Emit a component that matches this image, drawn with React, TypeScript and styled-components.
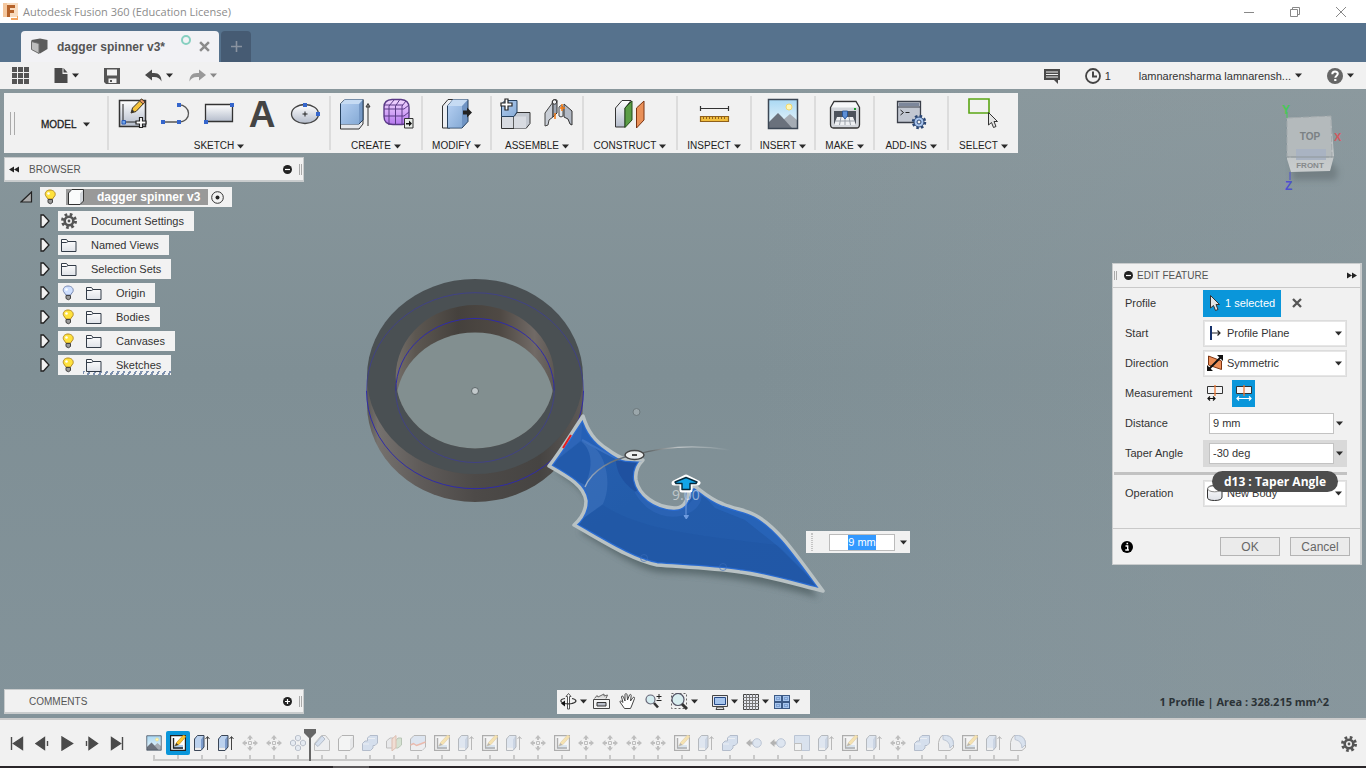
import React from "react";
import styled, { createGlobalStyle, css } from "styled-components";

const GlobalStyle = createGlobalStyle`
  *, *::before, *::after { box-sizing: border-box; }
  html, body, #root { height: 100%; }
  body { margin: 0; overflow: hidden; font: 11px/14px "Liberation Sans", Arial, sans-serif; color: #333; }
  button, input, select { font: inherit; color: inherit; }
  button { border: 0; padding: 0; background: none; cursor: pointer; }
  svg { display: block; flex: none; }
`;

/* ---------- shell ---------- */

const Shell = styled.div`
  display: flex;
  flex-direction: column;
  min-height: 100vh;
  background: #86959a;
`;

const TitleBar = styled.header`
  display: flex;
  align-items: center;
  height: 23px;
  padding: 0 2px;
  background: #fff;
`;

const AppTitle = styled.h1`
  flex: 1;
  margin: 0 0 0 5px;
  font: 11px/16px "Open Sans", "Noto Sans", sans-serif;
  color: #8c8c8c;
`;

const WindowButton = styled.button`
  display: grid;
  place-items: center;
  width: 46px;
  height: 22px;
`;

const TabBar = styled.nav`
  display: flex;
  align-items: flex-end;
  gap: 2px;
  height: 39px;
  padding-left: 21px;
  background: #56728d;
`;

const Tab = styled.div`
  display: flex;
  align-items: center;
  width: 198px;
  height: 31px;
  padding: 0 9px 0 10px;
  border-radius: 4px 4px 0 0;
  background: #f2f2f5;
`;

const TabName = styled.span`
  flex: 1;
  margin-left: 9px;
  padding-top: 1px;
  font-weight: bold;
  font-size: 12px;
  color: #555;
`;

const SyncRing = styled.span`
  align-self: flex-start;
  width: 10px;
  height: 10px;
  margin: 4px 8px 0 0;
  border: 2px solid #86cfc0;
  border-radius: 50%;
`;

const NewTab = styled.button`
  display: grid;
  place-items: center;
  width: 30px;
  height: 31px;
  border-radius: 4px 4px 0 0;
  background: #465b73;
`;

const QuickBar = styled.div`
  display: flex;
  align-items: center;
  height: 27px;
  padding: 0 12px;
  background: #f1f1f1;
`;

const QuickButton = styled.button<{ $after?: number }>`
  display: flex;
  align-items: center;
  gap: 4px;
  margin-right: ${(p) => p.$after ?? 0}px;
`;

const Spacer = styled.span<{ $width?: number }>`
  flex: ${(p) => (p.$width ? `0 0 ${p.$width}px` : "1")};
`;

/* ---------- viewport ---------- */

const Viewport = styled.main`
  position: relative;
  display: flex;
  flex: 1;
  flex-direction: column;
  padding: 4px;
  background: linear-gradient(90deg, #82929800 55%, #8f9ca166), linear-gradient(180deg, #89979c, #7f8f95 45%, #83939a);
`;

const Scene = styled.svg`
  position: absolute;
  inset: 0;
  width: 100%;
  height: 100%;
`;

const CubeSlot = styled.div`
  position: absolute;
  top: 11px;
  right: 19px;
`;

const Ribbon = styled.div`
  position: relative;
  display: flex;
  align-self: flex-start;
  height: 60px;
  background: #f1f1f1;
`;

const Workspace = styled.div`
  display: flex;
  align-items: center;
  width: 103px;
  padding-left: 6px;
`;

const Grip = styled.span<{ $height: number; $width?: number }>`
  width: ${(p) => p.$width ?? 4}px;
  height: ${(p) => p.$height}px;
  border: solid #aaa;
  border-width: 0 1px;
`;

const Caps = styled.button`
  display: flex;
  flex: none;
  align-items: center;
  justify-content: center;
  gap: 3px;
  padding-top: 5px;
  font-size: 10px;
  line-height: 14px;
  color: #222;
`;

const WorkspaceName = styled(Caps)`
  margin-left: 26px;
  gap: 6px;
  padding-top: 3px;
  -webkit-text-stroke: 0.3px;
`;

const Group = styled.section<{ $width: number }>`
  display: flex;
  flex-direction: column;
  width: ${(p) => p.$width}px;
  height: 54px;
  margin-top: 3px;
  border-left: 2px solid #dcdcdc;
`;

const Tools = styled.div`
  display: flex;
  flex: none;
  justify-content: center;
  height: 38px;
`;

const Tool = styled.button`
  display: grid;
  justify-items: center;
  align-items: start;
  width: 43px;
  padding-top: 2px;
`;

const Letter = styled.span`
  font-weight: bold;
  font-size: 37px;
  line-height: 34px;
  color: #444;
`;

const PanelHead = styled.div`
  position: relative;
  display: flex;
  align-items: center;
  width: 300px;
  height: 25px;
  padding: 0 1px 0 4px;
  background: #f1f1f1;
  border: 1px solid #c9cccd;
  border-bottom-width: 2px;
`;

const PanelName = styled.h2<{ $indent: number }>`
  flex: 1;
  margin: 0 0 0 ${(p) => p.$indent}px;
  padding-top: 1px;
  font-weight: normal;
  font-size: 10px;
  line-height: 14px;
  color: #555;
`;

const Middle = styled.div`
  display: flex;
  flex: 1;
  align-items: flex-start;
  justify-content: space-between;
  margin-top: 4px;
`;

const Tree = styled.ul`
  position: relative;
  display: flex;
  flex-direction: column;
  gap: 4px;
  margin: 5px 0 0;
  padding: 0 0 0 36px;
  list-style: none;
`;

const RootRow = styled.li`
  display: flex;
  align-items: center;
  gap: 7px;
  margin-left: -20px;
`;

const Row = styled.li`
  display: flex;
  align-items: center;
  gap: 8px;
`;

const RowBox = styled.div<{ $dashed?: boolean }>`
  display: flex;
  align-items: center;
  height: 20px;
  padding: 0 10px 0 3px;
  background: #f2f2f2;
  ${(p) =>
    p.$dashed &&
    css`
      background: repeating-linear-gradient(120deg, #7d90ad 0 2px, transparent 2px 5px) 25px 16px / 88px 4px no-repeat, #f2f2f2;
    `}
`;

const Bulb = styled.button`
  width: 25px;
`;

const RowIcon = styled.span`
  width: 30px;
`;

const RootName = styled.span`
  display: flex;
  align-items: center;
  gap: 13px;
  height: 16px;
  width: 142px;
  margin-left: -2px;
  padding-left: 2px;
  font-weight: bold;
  font-size: 12px;
  background: #999;
  color: #fff;
`;

const Activate = styled.button`
  margin: 0 -2px 0 3px;
`;

const BottomRow = styled.footer`
  position: relative;
  display: grid;
  grid-template-columns: 1fr auto 1fr;
  align-items: center;
`;

const NavBar = styled.div`
  display: flex;
  align-items: center;
  height: 24px;
  padding: 0 10px 0 3px;
  background: #f1f1f1;
`;

const NavButton = styled.button<{ $after?: number }>`
  display: flex;
  align-items: center;
  gap: 3px;
  margin-right: ${(p) => p.$after ?? 8}px;
`;

const Status = styled.output`
  justify-self: end;
  padding-right: 33px;
  font: bold 11px/16px "Open Sans", "Noto Sans", sans-serif;
  color: #2b3236;
`;

const Dimension = styled.div`
  position: absolute;
  left: 806px;
  top: 442px;
  display: flex;
  align-items: center;
  width: 104px;
  height: 22px;
  padding: 0 3px 0 5px;
  background: #f1f1f1;
`;

const DimensionGrip = styled.span`
  width: 3px;
  height: 18px;
  margin-right: 16px;
  border: dotted #c4c4c4;
  border-width: 0 1px;
`;

const DimensionValue = styled.input`
  width: 66px;
  height: 17px;
  margin-right: 5px;
  padding: 0;
  border: 1px solid #bbb;
  background: linear-gradient(#3399ff, #3399ff) center / 28px 15px no-repeat, #fff;
  color: #fff;
  text-align: center;
`;

/* ---------- edit feature ---------- */

const Dialog = styled.form`
  position: relative;
  width: 250px;
  margin-top: 106px;
  background: #f1f1f1;
  border: 1px solid #c9cccd;
  border-right-width: 2px;
`;

const DialogHead = styled.div`
  display: flex;
  align-items: center;
  height: 24px;
  padding: 0 3px 0 1px;
  border-bottom: 1px solid #c9c9c9;
`;

const Field = styled.div`
  display: flex;
  align-items: center;
  height: 30px;
  padding-left: 12px;
`;

const Label = styled.label`
  width: 78px;
`;

const Choice = styled.span`
  display: flex;
  align-items: center;
  width: 144px;
  height: 27px;
  padding: 0 4px 0 3px;
  border: 1px solid #dcdcdc;
  outline: 1px solid #e6e6e6;
  outline-offset: -2px;
  background: #fff;
`;

const Select = styled.select`
  flex: 1;
  min-width: 0;
  margin-left: 4px;
  padding: 0;
  border: 0;
  appearance: none;
  background: transparent;
`;

const Selected = styled.button`
  display: flex;
  align-items: center;
  gap: 5px;
  width: 78px;
  height: 27px;
  margin-right: 11px;
  padding-left: 7px;
  background: #0a96da;
  color: #fff;
`;

const Measure = styled.button<{ $on?: boolean }>`
  display: grid;
  place-items: center;
  width: 23px;
  height: 27px;
  margin-right: 6px;
  background: ${(p) => (p.$on ? "#0a96da" : "none")};
`;

const Entry = styled.span<{ $active?: boolean }>`
  display: flex;
  align-items: center;
  gap: 2px;
  width: 144px;
  height: 27px;
  padding: 0 4px 0 6px;
  background: ${(p) => (p.$active ? "#d9d9d9" : "none")};
`;

const EntryInput = styled.input`
  flex: 1;
  min-width: 0;
  height: 21px;
  padding: 0 3px;
  border: 1px solid #c3c3c3;
  background: #fff;
`;

const Rule = styled.hr`
  height: 3px;
  margin: 4px 13px 3px 1px;
  border: 0;
  background: #c2c2c2;
`;

const DialogFoot = styled.div`
  display: flex;
  align-items: center;
  gap: 10px;
  height: 36px;
  margin-top: 20px;
  padding: 0 10px 0 8px;
  border-top: 1px solid #c9c9c9;
`;

const DialogButton = styled.button`
  width: 60px;
  height: 19px;
  border: 1px solid #b4b4b4;
  background: #ebebeb;
  font-size: 12px;
  line-height: 16px;
  color: #666;
`;

const Tooltip = styled.div`
  position: absolute;
  top: 207px;
  left: 99px;
  width: 126px;
  height: 21px;
  border-radius: 11px;
  background: #4d4d4d;
  color: #fff;
  font: bold 12px/21px "Open Sans", "Noto Sans", sans-serif;
  text-align: center;
  white-space: nowrap;
`;

/* ---------- timeline ---------- */

const Timeline = styled.footer`
  display: flex;
  align-items: flex-start;
  height: 48px;
  padding-left: 10px;
  border-top: 2px solid #cbcbcb;
  background: #f1f1f1;
`;

const Transport = styled.div`
  display: flex;
  gap: 11px;
  margin: 16px 18px 0 0;
`;

const Steps = styled.ol`
  display: flex;
  margin: 11px 0 0;
  padding: 0;
  list-style: none;
`;

const Step = styled.li<{ $edge?: "first" | "last" }>`
  position: relative;
  display: flex;
  flex-direction: column;
  width: 24px;
  &::before {
    content: "";
    order: 1;
    width: 2px;
    height: 4px;
    margin: 0 auto;
    background: #c9c9c9;
  }
  &::after {
    content: "";
    order: 2;
    height: 2px;
    margin-left: ${(p) => (p.$edge === "first" ? 11 : 0)}px;
    margin-right: ${(p) => (p.$edge === "last" ? 11 : 0)}px;
    background: #c9c9c9;
  }
`;

const StepButton = styled.button<{ $on?: boolean; $dim?: boolean }>`
  display: grid;
  place-items: center;
  width: 24px;
  height: 24px;
  border-radius: 2px;
  background: ${(p) => (p.$on ? "#0a96da" : "none")};
  svg { opacity: ${(p) => (p.$dim ? 0.32 : 1)}; }
`;

const Marker = styled.svg`
  position: absolute;
  top: -2px;
  left: -6px;
`;

const TimelineSettings = styled.button`
  margin: 16px 9px 0 0;
`;

const Taskbar = styled.div`
  height: 2px;
  padding-left: 333px;
  background: #2a2629;
  &::before {
    content: "";
    display: block;
    width: 36px;
    height: 2px;
    background: #5b585a;
  }
`;

/* ---------- drawings ---------- */

type Draw = { children: React.ReactNode; w?: number; h?: number; box?: string };
const Svg = ({ children, w = 16, h = w, box }: Draw) => (
  <svg width={w} height={h} viewBox={box ?? `0 0 ${w} ${h}`} fill="none" aria-hidden="true">
    {children}
  </svg>
);

const Caret = ({ color = "#2b2b2b" }: { color?: string }) => (
  <Svg w={7} h={5}>
    <path d="M0 0.500h7L3.500 4.500z" fill={color} />
  </Svg>
);

const Cross = ({ color = "#888", w = 10 }: { color?: string; w?: number }) => (
  <Svg w={w} box="0 0 10 10">
    <path d="M1 1l8 8M9 1l-8 8" stroke={color} strokeWidth="2.300" />
  </Svg>
);

const Definitions = styled.svg`
  position: absolute;
`;

const Gradients = () => (
  <Definitions width="0" height="0" aria-hidden="true">
    <defs>
      <linearGradient id="steel" x1="0" y1="0" x2="0" y2="1">
        <stop offset="0" stopColor="#fff" />
        <stop offset="1" stopColor="#b4bccb" />
      </linearGradient>
      <linearGradient id="pale" x1="0" y1="0" x2="0" y2="1">
        <stop offset="0" stopColor="#fff" />
        <stop offset="1" stopColor="#dfe2e8" />
      </linearGradient>
      <linearGradient id="blue" x1="0" y1="0" x2="1" y2="1">
        <stop offset="0" stopColor="#b2cdf0" />
        <stop offset="1" stopColor="#86abd6" />
      </linearGradient>
      <linearGradient id="violet" x1="0" y1="0" x2="0" y2="1">
        <stop offset="0" stopColor="#f3d8ff" />
        <stop offset="1" stopColor="#b678ef" />
      </linearGradient>
      <linearGradient id="sky" x1="0" y1="0" x2="0" y2="1">
        <stop offset="0" stopColor="#aad8f3" />
        <stop offset="1" stopColor="#eef8fc" />
      </linearGradient>
      <linearGradient id="wallIn" x1="0" y1="0" x2="1" y2="0">
        <stop offset="0" stopColor="#7b7570" />
        <stop offset="0.15" stopColor="#5c5751" />
        <stop offset="0.4" stopColor="#45413d" />
        <stop offset="0.65" stopColor="#4f4944" />
        <stop offset="0.85" stopColor="#716a66" />
        <stop offset="1" stopColor="#57524e" />
      </linearGradient>
      <linearGradient id="wallOut" x1="0" y1="0" x2="1" y2="0">
        <stop offset="0" stopColor="#5a5855" />
        <stop offset="0.05" stopColor="#75716e" />
        <stop offset="0.25" stopColor="#5f5b59" />
        <stop offset="0.5" stopColor="#4d4a48" />
        <stop offset="0.8" stopColor="#464442" />
        <stop offset="1" stopColor="#5d5957" />
      </linearGradient>
      <linearGradient id="blade" x1="0" y1="0" x2="1" y2="1">
        <stop offset="0" stopColor="#2860b2" />
        <stop offset="0.4" stopColor="#235caa" />
        <stop offset="1" stopColor="#235aab" />
      </linearGradient>
      <linearGradient id="arcFade" gradientUnits="userSpaceOnUse" x1="585" y1="0" x2="730" y2="0">
        <stop offset="0" stopColor="#9fb2cc" />
        <stop offset="0.2" stopColor="#66707a" />
        <stop offset="0.45" stopColor="#63696b" />
        <stop offset="0.65" stopColor="#c0c6c8" />
        <stop offset="1" stopColor="#c0c6c8" stopOpacity="0" />
      </linearGradient>
      <linearGradient id="cube" x1="0" y1="0" x2="0" y2="1">
        <stop offset="0" stopColor="#b3b9bb" />
        <stop offset="1" stopColor="#c9cdce" />
      </linearGradient>
      <filter id="soft" x="-20%" y="-20%" width="140%" height="140%">
        <feGaussianBlur stdDeviation="3" />
      </filter>
    </defs>
  </Definitions>
);

const Grid9 = () => (
  <Svg w={18}>
    {[0, 6, 12].map((y) => [0, 6, 12].map((x) => <rect key={`${x}-${y}`} x={x} y={y} width="5" height="5" fill="#555" />))}
  </Svg>
);
const FileIcon = () => (
  <Svg w={14} h={17}>
    <path d="M0.500 1h8v6h5v9h-13z" fill="#4a4a4a" />
    <path d="M9.500 1l4 4.500h-4z" fill="#4a4a4a" />
  </Svg>
);
const SaveIcon = () => (
  <Svg w={16}>
    <path d="M0 0h16v16H2L0 14z" fill="#555" />
    <path d="M3 1.500h10v6H3zM4.500 10.500h8V15h-8z" fill="#f1f1f1" />
    <path d="M6 12h2v2H6z" fill="#555" />
  </Svg>
);
const Undo = ({ redo }: { redo?: boolean }) => (
  <Svg w={17} h={14}>
    <g transform={redo ? "translate(17 0) scale(-1 1)" : undefined}>
      <path d="M0 6L7 0.500V4h2c5 0 7.500 3 7.500 8.500C15 9.500 13 8 9 8H7v3.500z" fill={redo ? "#999" : "#4a4a4a"} />
    </g>
  </Svg>
);
const Speech = () => (
  <Svg w={16}>
    <path d="M0 1h16v11h-2v4l-4-4H0z" fill="#4a4a4a" />
    <path d="M2 4h12M2 6.500h12M2 9h12" stroke="#f1f1f1" />
  </Svg>
);
const Clock = () => (
  <Svg w={16}>
    <circle cx="8" cy="8" r="7" stroke="#444" strokeWidth="1.800" />
    <path d="M8 3.500V8.500h4" stroke="#444" strokeWidth="2" />
  </Svg>
);
const Help = () => (
  <Svg w={16}>
    <circle cx="8" cy="8" r="8" fill="#666" />
    <path d="M5.300 6.200c0-3.600 5.500-3.400 5.500-.4 0 1.900-2.500 1.900-2.500 4" stroke="#fff" strokeWidth="2" />
    <path d="M7.200 11h2.200v2H7.200z" fill="#fff" />
  </Svg>
);
const FusionLogo = () => (
  <Svg w={16} h={17}>
    <path d="M1 0h15v14H1z" fill="#f8dcc0" />
    <path d="M1 0h4v14H1z" fill="#f4c79e" />
    <path d="M5 2h8v3H8v2h4v3H8v4H5z" fill="#b5622a" />
    <path d="M9 15h6v-2h1v4H9z" fill="#f3a55f" />
  </Svg>
);
const TabCube = () => (
  <Svg w={17} h={17}>
    <path d="M0.500 2L9 0.500l7.500 1.500v9L9 15.500l-8.500-4.500z" fill="#5c5c5c" />
    <path d="M0.500 3.500L8 5.500v10l-7.500-4z" fill="#bdbdbd" stroke="#6c6c6c" />
  </Svg>
);

const Pencil = () => (
  <g>
    <path d="M14 15l1.500-5L24.500 1l3.500 3-9 9.500z" fill="#f5c33b" stroke="#3a3020" />
    <path d="M24.500 1l3.500 3-1.800 2-3.600-3z" fill="#e79a6b" stroke="#3a3020" strokeWidth="0.800" />
    <path d="M14 15l1.200-3.500 2.300 2z" fill="#333" />
  </g>
);
const SketchBig = () => (
  <Svg w={32}>
    <path d="M2.500 2.500h26v26h-26z" fill="url(#steel)" stroke="#333" strokeWidth="1.500" />
    <path d="M6 6v18h14" stroke="#222" />
    <path d="M5 22.500h3.500V26H5z" fill="#6ea3ea" stroke="#2a5bb5" />
    <Pencil />
    <path d="M22.500 19.500h3v3.500h3.500v3h-3.500v3.500h-3V26H19v-3h3.500z" fill="#fff" stroke="#222" strokeWidth="1.200" />
  </Svg>
);
const LineTool = () => (
  <Svg w={32}>
    <path d="M3 24h15c15 0 13-18 0-17" stroke="#555" strokeWidth="1.300" />
    <path d="M1 22h4v4H1zM17 22h4v4h-4zM17 5h4v4h-4z" fill="#3566cc" />
  </Svg>
);
const RectTool = () => (
  <Svg w={32}>
    <path d="M2.500 6.500h27v17h-27z" fill="url(#steel)" stroke="#333" strokeWidth="1.300" />
    <path d="M1 22h4v4H1zM27 5h4v4h-4z" fill="#3566cc" />
  </Svg>
);
const TextTool = () => <Letter>A</Letter>;
const EllipseTool = () => (
  <Svg w={32}>
    <ellipse cx="16" cy="16" rx="13.500" ry="9.500" fill="url(#steel)" stroke="#444" strokeWidth="1.300" />
    <path d="M14 5h4v4h-4zM27 14h4v4h-4z" fill="#3566cc" />
    <path d="M13.500 16h5M16 13.500v5" stroke="#222" />
  </Svg>
);
const ExtrudeBig = () => (
  <Svg w={32}>
    <path d="M1.500 6L6 1.500h18V26l-4 5H1.500z" fill="#e6e8ec" stroke="#333" />
    <path d="M1.500 6L6 1.500h18V22l-4 4H1.500z" fill="#7699c6" stroke="#26415f" />
    <path d="M1.500 6L6 1.500h18L20 6z" fill="#c6dbf3" />
    <path d="M2 6h18v20H2z" fill="url(#blue)" />
    <path d="M29 28V7M27 9l2-3.500L31 9z" stroke="#333" />
  </Svg>
);
const FormBig = () => (
  <Svg w={32}>
    <path d="M2 9q0-7 8-7.500h9q8 .5 8 8v9q0 8-7 8h-9q-9 0-9-8z" fill="url(#violet)" stroke="#5a3a86" strokeWidth="1.400" />
    <path d="M2 11h20l5-4M2 18h20l5-4M7 27V8l5-6M13.500 27V8l4-6M20 27V8l4-5M3 7h18" stroke="#5a3a86" />
    <path d="M22.500 20.500h8.500v9.500h-8.500z" fill="#e8ece8" stroke="#333" />
    <path d="M24 25h3v-2.500l3 3-3 3V26.500h-3z" fill="#111" />
  </Svg>
);
const ModifyBig = () => (
  <Svg w={32}>
    <path d="M1.500 8L7 1.500h8L9 8v22H1.500z" fill="#eceef2" stroke="#333" />
    <path d="M6.500 8L12 1.500h15v22l-6 6.500H6.500z" fill="#6f94c4" stroke="#26415f" />
    <path d="M6.500 8L12 1.500h15L21 8z" fill="#c6dbf3" />
    <path d="M7 8h14v21.500H7z" fill="url(#blue)" />
    <path d="M22 12.500h4V9.500l5 5-5 5v-3h-4z" fill="#222" />
  </Svg>
);
const AssembleBig = () => (
  <Svg w={32}>
    <path d="M1.500 18.500h12.500v12H1.500z" fill="#d8dbe1" stroke="#333" />
    <path d="M14 18.500l3-4h13v11l-4 5H14z" fill="#c3c8d0" stroke="#333" />
    <path d="M1.500 6L5 2.500h12V14l-3 4.500H1.500z" fill="url(#blue)" stroke="#26415f" />
    <path d="M14 18.500h12v12H14z" fill="#d8dbe1" />
    <path d="M5 1h3v4h4v3H8v4H5V8H1V5h4z" fill="#fff" stroke="#222" strokeWidth="1.200" />
  </Svg>
);
const JointBig = () => (
  <Svg w={32}>
    <path d="M2 28V15l8-11v15l-4 3-1 5z" fill="#c9ced6" stroke="#444" />
    <path d="M9 4q1-3 3.500-2.500T14 4v11l-4 4V6z" fill="#9fa7b3" stroke="#333" />
    <circle cx="11.500" cy="4" r="2.200" fill="#f0f1f3" stroke="#333" />
    <path d="M29 27V13l-8-7v13l4 2 2 5z" fill="#b3bac5" stroke="#333" />
    <path d="M16 9q2-3 4 0v9q-2 2-4 0z" fill="#e4e7eb" stroke="#444" />
    <path d="M12 15v6M19 6v7M17 10h5" stroke="#f47a12" strokeWidth="1.500" />
  </Svg>
);
const ConstructBig = () => (
  <Svg w={32}>
    <path d="M1.500 10L8 2.500h9L11 10v19H1.500z" fill="url(#steel)" stroke="#333" />
    <path d="M11 10l7-7v19l-7 7.500z" fill="#5b9d46" stroke="#254c1b" />
    <path d="M22.500 10L30 3v19l-7.500 8z" fill="#e99058" stroke="#7b3412" />
  </Svg>
);
const InspectBig = () => (
  <Svg w={32}>
    <path d="M2.500 10.500h28M2.500 8v5M30.500 8v5" stroke="#333" strokeWidth="1.200" />
    <path d="M2.500 18.500h28v5h-28z" fill="#f0bd3d" stroke="#90601a" strokeWidth="1.200" />
    <path d="M5.500 19v2M8.500 19v2M11.500 19v2M14.500 19v2M17.500 19v2M20.500 19v2M23.500 19v2M26.500 19v2" stroke="#90601a" />
  </Svg>
);
const Picture = ({ w = 32 }: { w?: number }) => (
  <Svg w={w} box="0 0 32 32">
    <path d="M1.500 1.500h29v29h-29z" fill="url(#sky)" />
    <circle cx="22" cy="9" r="3" fill="#fff7b8" stroke="#f1d76c" />
    <path d="M16 22l7-6 7 6v8H16z" fill="#a5acb4" />
    <path d="M2 24l9-9 4 4 10 11H2z" fill="#6a717c" />
    <path d="M1.500 1.500h29v29h-29z" stroke="#3c4755" strokeWidth="1.500" />
  </Svg>
);
const MakeBig = () => (
  <Svg w={32}>
    <path d="M1.500 9.500L5 3.500h22l3.500 6v17q0 3.500-3 3.500h-23q-3 0-3-3.500z" fill="#d3d6db" stroke="#333" strokeWidth="1.300" />
    <path d="M5.500 4.500h21l3 5h-27z" fill="#f6f7f8" />
    <path d="M5 13h22v14H5z" fill="#4d535c" />
    <path d="M8 19h16l3 8H5z" fill="#eef0f2" />
    <path d="M6.500 23h19M12 19l-1.500 8M16 19v8M20 19l1.500 8" stroke="#9aa0a8" />
    <path d="M13.500 13h5v5l-2.500 3-2.500-3z" fill="#5c8fd6" stroke="#1d4c93" strokeWidth="0.800" />
    <path d="M25 10h2v2h-2z" fill="#1a9c2a" />
  </Svg>
);
const AddinsBig = () => (
  <Svg w={32}>
    <path d="M2.500 3.500h23v21h-23z" fill="#c2c7d1" stroke="#3a3f49" strokeWidth="1.300" />
    <path d="M4 5h20v3H4z" fill="#7d879b" />
    <path d="M2.500 9h23" stroke="#3a3f49" />
    <path d="M5.500 12l3 2.500-3 2.500M10.500 14.500h4" stroke="#222" />
    <circle cx="24" cy="24" r="5.500" stroke="#2b4774" strokeWidth="3.500" strokeDasharray="2.300 2" />
    <circle cx="24" cy="24" r="5" fill="#a9c5ee" stroke="#2b4774" />
    <circle cx="24" cy="24" r="2" fill="#f1f1f1" stroke="#2b4774" />
  </Svg>
);
const Arrowhead = ({ x = 0, y = 0 }: { x?: number; y?: number }) => (
  <path transform={`translate(${x} ${y})`} d="M0 0v12.500l3-2.500 2 5 2.500-1L5.500 9H9z" fill="#e4e4e4" stroke="#333" />
);
const SelectBig = () => (
  <Svg w={32}>
    <path d="M1 1h20v14H1z" stroke="#5ba614" strokeWidth="1.600" />
    <Arrowhead x={20.5} y={14.5} />
  </Svg>
);

const BulbIcon = ({ off }: { off?: boolean }) => (
  <Svg w={15} h={16}>
    <path d="M7 1C3.500 1 1.500 3.500 2.500 6.500L5 10h4.500l2.500-3.500C13 3.500 10.500 1 7 1z" fill={off ? "#cfe0ff" : "#ffe23d"} stroke={off ? "#7788b0" : "#b38a24"} />
    <path d="M5 10.500h4.500v3q-2 2.500-4.500 0z" fill="#999" stroke="#444" />
    <circle cx="5.500" cy="4.500" r="1.300" fill="#fff" />
  </Svg>
);
const Folder = () => (
  <Svg w={16}>
    <path d="M0.500 14.500v-12h5l1.500 2h8v10z" fill="url(#pale)" stroke="#333c48" />
    <path d="M0.500 5.500h5l1.500-1" stroke="#333c48" />
  </Svg>
);
const GearIcon = () => (
  <Svg w={16}>
    <circle cx="8" cy="8" r="6.500" stroke="#555" strokeWidth="3" strokeDasharray="2.600 2.500" />
    <circle cx="8" cy="8" r="4.300" stroke="#555" strokeWidth="2.600" />
    <circle cx="8" cy="8" r="1.400" fill="#555" />
  </Svg>
);
const BoxIcon = () => (
  <Svg w={16}>
    <path d="M0.500 4l3.500-3.500h11.500V12l-3.500 3.500H0.500z" fill="#d3d7dc" stroke="#333" />
    <path d="M1 4.500L4 1h11l-3 3.500V15H1z" fill="#fafbfb" />
  </Svg>
);
const Closed = () => (
  <Svg w={10} h={14}>
    <path d="M1 1h2.500L9 7l-5.500 6H1z" fill="#f2f2f2" stroke="#222" strokeWidth="1.300" />
  </Svg>
);
const Open = () => (
  <Svg w={13} h={12}>
    <path d="M1 11h10.500V1z" fill="#aaa" stroke="#222" strokeWidth="1.200" />
  </Svg>
);
const RadioIcon = () => (
  <Svg w={13}>
    <circle cx="6.500" cy="6.500" r="5.800" stroke="#333" />
    <circle cx="6.500" cy="6.500" r="2" fill="#222" />
  </Svg>
);
const Disc = ({ plus }: { plus?: boolean }) => (
  <Svg w={9}>
    <circle cx="4.500" cy="4.500" r="4.500" fill="#222" />
    <path d={plus ? "M2 4.500h5M4.500 2v5" : "M2 4.500h5"} stroke="#fff" strokeWidth="1.200" />
  </Svg>
);
const Rewind = ({ flip }: { flip?: boolean }) => (
  <Svg w={10} h={7}>
    <path d={flip ? "M0 0.500l5 3-5 3zM5 0.500l5 3-5 3z" : "M5 0.500l-5 3 5 3zM10 0.500l-5 3 5 3z"} fill="#222" />
  </Svg>
);

/* navigation bar icons */
const OrbitIcon = () => (
  <Svg w={17}>
    <path d="M5 5.500C-1 6.500 0 9.500 5 10.500M12 10.500c5-1 5.500-4 0-5" stroke="#333" strokeWidth="1.200" />
    <path d="M7.500 16V3.500H6L8.500 0.500l2.500 3H9.500V16z" fill="#fff" stroke="#555" />
    <path d="M4 10.500c4 .7 7 .4 9-.2" stroke="#333" strokeWidth="1.200" />
    <path d="M5 7.500v6L1 10.500z" fill="#111" />
  </Svg>
);
const LookIcon = () => (
  <Svg w={17}>
    <path d="M1.500 5.500l2.500-3 1 1.500L11 1v2l3.500-1-1.500 3.500" fill="#ddd" stroke="#666" />
    <path d="M0.500 6.500h16v9h-16z" fill="#f4f4f4" stroke="#444" />
    <path d="M4 9.500h9v3.500H4z" fill="#b9bec9" stroke="#333" />
  </Svg>
);
const HandIcon = () => (
  <Svg w={17}>
    <path d="M5.500 15.500L1 9c0-1.500 1-1.500 3 .5L2.500 4c0-1.300 1.500-1.300 2 0l1.500 4L6 1.500c.3-1.300 1.800-1 2 0L8.500 7 10.500 2c.5-1 2-.5 1.700.5L11.500 8l2.500-3.500c1-.7 2 0 1.500 1L13 12l-1.500 3.500z" fill="#fff" stroke="#444" />
  </Svg>
);
const ZoomIcon = () => (
  <Svg w={17}>
    <circle cx="5.500" cy="6.500" r="4.500" fill="#d5ecf0" stroke="#667" strokeWidth="1.200" />
    <path d="M9 10l4 4.500" stroke="#333" strokeWidth="2.600" />
    <path d="M11.500 3.500h5M14 1v5M11.500 7.500h5" stroke="#222" />
  </Svg>
);
const FitIcon = () => (
  <Svg w={17}>
    <path d="M0.500 0.500h15v15h-15z" stroke="#666" strokeDasharray="2 2" />
    <circle cx="7" cy="6.500" r="6" fill="#d9eef0" stroke="#556" strokeWidth="1.200" />
    <path d="M11 11l5 5" stroke="#333" strokeWidth="3" />
  </Svg>
);
const MonitorIcon = () => (
  <Svg w={16}>
    <path d="M0.500 1.500h15v11h-15z" fill="#e6e8ee" stroke="#444" />
    <path d="M2.500 3.500h11v7h-11z" fill="#a7c6ee" stroke="#274b88" />
    <path d="M5 13l-1 2.500h8L11 13z" fill="#ddd" stroke="#444" />
  </Svg>
);
const MeshIcon = () => (
  <Svg w={16}>
    <path d="M0.500 0.500h15v15h-15z" fill="#e7e9ef" stroke="#444" />
    <path d="M3.500 0v16M6.500 0v16M9.500 0v16M12.500 0v16M0 3.500h16M0 6.500h16M0 9.500h16M0 12.500h16" stroke="#777" />
  </Svg>
);
const PanesIcon = () => (
  <Svg w={16} h={14}>
    {[[0.5, 0.5], [8.5, 0.5], [0.5, 7.5], [8.5, 7.5]].map(([x, y]) => (
      <g key={`${x}-${y}`}>
        <rect x={x} y={y} width="7" height="6" fill="#a7c6ee" stroke="#3c5a86" />
        <rect x={x + 2} y={y + 2} width="3" height="2" stroke="#7fa2d4" />
      </g>
    ))}
  </Svg>
);

/* timeline icons */
const StepSketch = () => (
  <Svg w={16}>
    <path d="M0.500 0.500h15v15h-15z" fill="#fff" stroke="#222" strokeWidth="1.400" />
    <path d="M3 10h10v4H3z" fill="#a9c9ec" />
    <path d="M3.500 3v10H13" stroke="#222" strokeWidth="1.400" />
    <path d="M5 11l1.500-3.500L13.500 0 16 1.500 9 9.500z" fill="#ffc52e" stroke="#b88410" strokeWidth="0.600" />
    <path d="M5 11l1.300-3 2 1.800z" fill="#333" />
  </Svg>
);
const StepExtrude = () => (
  <Svg w={16}>
    <path d="M0.500 4L3.500 0.500h6.500V12L7 15.500H0.500z" fill="#7d9ccb" stroke="#3b4656" />
    <path d="M1 4.500L3.500 1h6L7 4.500V12.500H1z" fill="#bcd2ee" />
    <path d="M1 12.500h6V15H1z" fill="#eee" />
    <path d="M13.500 15V2M11.500 4l2-2.500 2 2.500" stroke="#444" />
  </Svg>
);
const StepMove = () => (
  <Svg w={16}>
    <path d="M8 0l3 3.500H9V5H7V3.500H5zM8 16l3-3.500H9V11H7v1.500H5zM0 8l3.500-3v2H5v2H3.500v2zM16 8l-3.500-3v2H11v2h1.500v2z" fill="#555" />
    <path d="M6.500 6.500h3v3h-3z" stroke="#555" />
  </Svg>
);
const StepPattern = () => (
  <Svg w={16}>
    {[[8, 3], [3, 8], [13, 8], [8, 13]].map(([x, y]) => (
      <path key={`${x}-${y}`} d={`M${x - 2.5} ${y - 1.5}l2.500-1.500 2.500 1.500v3l-2.500 1.500-2.500-1.500z`} fill="#cfdcf2" stroke="#3d5070" />
    ))}
  </Svg>
);
const StepChamfer = () => (
  <Svg w={16}>
    <path d="M0.500 8.500l7-8h4l4 5v10H0.500z" fill="#e6e9ee" stroke="#555" />
    <path d="M1 9l7-8 3 3-7 7.500z" fill="#9dbbe6" stroke="#34507c" />
  </Svg>
);
const StepCombine = () => (
  <Svg w={16}>
    <path d="M0.500 8.500L3 6h2.500V3L8 0.500h7.500V8L13 10.500h-2V13l-2.500 2.500h-8z" fill="#9dbbe6" stroke="#34507c" />
    <path d="M6 3.500h7M1 9h6" stroke="#dfeafa" />
  </Svg>
);
const StepSplit = () => (
  <Svg w={16}>
    <path d="M0.500 6L4 3h3v10H0.500z" fill="#d6dae0" stroke="#555" />
    <path d="M9.500 6L12 3h3.500v7L12 13H9.500z" fill="#9cc593" stroke="#456b3c" />
    <path d="M6 4l4-3.500v12L6 16z" fill="#f0b79a" stroke="#b3552a" />
  </Svg>
);
const StepSplitBody = () => (
  <Svg w={16}>
    <path d="M0.500 4L4 0.500h11.500V12L12 15.500H0.500z" fill="#b5cdf0" stroke="#444" />
    <path d="M1 10h11l3-4v6L12 15H1z" fill="#e8eaee" />
    <path d="M0.500 10l3-1.500 3 2 4-1.500 5-2" stroke="#e04a22" strokeWidth="1.400" />
  </Svg>
);
const StepJoint = () => (
  <Svg w={16}>
    <path d="M0 8l4.500-4v2.500H8v3H4.500V12z" fill="#333" />
    <circle cx="11" cy="8" r="4.300" fill="#b5cdf0" stroke="#4c6a98" />
  </Svg>
);
const StepScale = () => (
  <Svg w={16}>
    <path d="M0.500 0.500h15v15h-15z" fill="#a9c4ea" stroke="#4c6a98" />
    <path d="M0.500 8.500h7v7h-7z" fill="#f4f5f7" stroke="#555" />
  </Svg>
);
const StepFillet = () => (
  <Svg w={16}>
    <path d="M0.500 7.500Q1 3.500 4 0.500h4.500q7 1 7 9v3L12 15.500H0.500z" fill="#e6e9ee" stroke="#444" />
    <path d="M5 0.500h3.500q7 1 7 9L12 13Q12 6 5 4.500z" fill="#a9c4ea" stroke="#4c6a98" />
  </Svg>
);

/* dialog icons */
const PlaneIcon = () => (
  <Svg w={16}>
    <path d="M4 1v14" stroke="#15306a" strokeWidth="2" />
    <path d="M5 8h8M10.500 5.500L13 8l-2.500 2.500" stroke="#222" strokeWidth="1.200" />
  </Svg>
);
const SymmetricIcon = () => (
  <Svg w={16}>
    <path d="M1.500 1l13 5v8.500l-13-4.500z" fill="#ec8f58" stroke="#7b3412" />
    <path d="M1.500 14.500l13-13" stroke="#111" strokeWidth="2" />
    <path d="M16 0v6l-6-6zM0 16v-6l6 6z" fill="#111" />
  </Svg>
);
const MeasureIcon = ({ on }: { on?: boolean }) => (
  <Svg w={16}>
    <path d="M0.500 1.500h15v7h-15z" fill="#f3f4f6" stroke="#333" />
    <path d="M8 0v11" stroke="#f07830" strokeWidth="1.300" />
    {on ? (
      <path d="M1 13.500h14M3 11.500l-2 2 2 2M13 11.500l2 2-2 2" stroke="#fff" strokeWidth="1.200" />
    ) : (
      <path d="M1 13.500h7M3 11.500l-2 2 2 2M6 11.500l2 2-2 2" stroke="#111" strokeWidth="1.200" />
    )}
  </Svg>
);
const Cylinder = () => (
  <Svg w={16}>
    <path d="M0.500 4Q1 0.500 7.500 0.500T15 4v8q0 3.500-7.500 3.500T0.500 12z" fill="url(#pale)" stroke="#333" />
    <ellipse cx="7.700" cy="3.800" rx="7" ry="3" fill="#fff" stroke="#888" />
  </Svg>
);
const InfoIcon = () => (
  <Svg w={12}>
    <circle cx="6" cy="6" r="6" fill="#000" />
    <path d="M4.500 5h2.200v4M4.300 9h3.600M5.500 2.500h1.600" stroke="#fff" strokeWidth="1.400" />
  </Svg>
);

const bladePath =
  "M583 416C588 432 595 441 607 449C615 455 620 458 626 459L643 460C637 466 635 473 636 480C639 495 655 507 674 508C683 508 686 503 688 496C689 490 691 485 696 487C705 494 712 500 723 504C735 509 746 510 755 515C778 527 797 556 823 591C795 584 765 575 740 572C712 568 683 567 657 565C632 560 606 543 574 525C582 518 586 510 586 501C584 486 570 478 549 466C560 452 571 434 583 416Z";

const Model = () => (
  <Scene aria-label="Ring with dagger blade" role="img">
    <defs>
      <clipPath id="bore"><ellipse cx="475" cy="376.700" rx="79.300" ry="71.700" /></clipPath>
      <clipPath id="shape"><path d={bladePath} /></clipPath>
    </defs>
    <g transform="translate(0 -89)">
      <path d="M367 376.500V404A108 98 0 0 0 583 404V376.500z" fill="url(#wallOut)" />
      <ellipse cx="475" cy="376.500" rx="108" ry="97.500" fill="#4a5053" />
      <g clipPath="url(#bore)">
        <rect x="390" y="300" width="170" height="155" fill="url(#wallIn)" />
        <ellipse cx="475" cy="404" rx="79" ry="71.500" fill="#828f90" />
      </g>
      <g fill="none" stroke="#3b39a6">
        <path d="M366.500 390.700A108.500 98 0 0 1 583.500 390.700" strokeOpacity="0.600" />
        <path d="M366.500 390.700A108.500 98 0 0 0 583.500 390.700" stroke="#2f2ba8" />
        <path d="M395.800 390.500A79.200 72 0 0 0 554.200 390.500" strokeOpacity="0.600" />
        <path d="M395.800 390.500A79.200 72 0 0 1 554.200 390.500" stroke="#2f2ba8" />
      </g>
      <circle cx="475" cy="391" r="3.500" fill="#c3cacc" stroke="#5d6769" />
      <circle cx="636.500" cy="412" r="3.500" fill="#9ba7ab" stroke="#6c787c" />

      <path d="M580 532C610 550 640 572 665 573C720 574 780 586 818 598L800 570 600 520zM553 470C572 482 586 492 588 502L600 480z" fill="#4c5b5e" opacity="0.700" filter="url(#soft)" />
      <path d={bladePath} fill="url(#blade)" />
      <g clipPath="url(#shape)">
        <path d="M583 416L582 440 549 466z" fill="#2d65b8" />
        <path d="M583 416L581 441 604 451 634 461z" fill="#2560b6" />
        <path d="M582 440C590 444 597 449 620 460" stroke="#3a71c2" strokeWidth="2" fill="none" />
        <path d="M549 466L581 441C595 444 603 455 606 470C609 484 607 495 603 504L574 525 588 505z" fill="#467ac4" opacity="0.450" />
        <path d="M549 466L581 441C594 452 592 470 585 485z" fill="#225aab" />
        <path d="M616 461L645 460 634 482 645 498C628 488 617 477 616 461z" fill="#1f51a0" />
        <path d="M638 490C650 512 672 518 690 508C697 503 700 497 696 484" stroke="#2f68bb" strokeWidth="8" fill="none" opacity="0.600" />
        <path d="M603 505C640 530 700 536 778 545L823 591H740L650 568 574 525z" fill="#1f54a2" opacity="0.450" />
        <path d="M696 487L724 504 755 515 778 532 823 591 780 548 745 520 715 508z" fill="#2a66bc" opacity="0.700" />
        <path d={bladePath} fill="none" stroke="#2a6bd0" strokeWidth="6" />
      </g>
      <path d={bladePath} fill="none" stroke="#b9c2c4" strokeWidth="3.500" strokeLinejoin="round" />
      <path d="M563 448l8-13" stroke="#e81c1c" strokeWidth="2" />
      <path d="M585 487C592 470 612 459 634 455C665 446 700 445 730 450" fill="none" stroke="url(#arcFade)" strokeWidth="1.300" />
      <ellipse cx="634.500" cy="455" rx="9.500" ry="4.500" fill="#eceeee" stroke="#444" strokeWidth="1.400" />
      <path d="M632 455h5" stroke="#444" strokeWidth="2" />
      <circle cx="644" cy="558" r="3.500" fill="none" stroke="#3a6dbb" opacity="0.600" />
      <circle cx="723" cy="567" r="3.500" fill="none" stroke="#3a6dbb" opacity="0.600" />
      <text x="672" y="500" fontFamily="Open Sans, sans-serif" fontSize="14" fill="#fff" fillOpacity="0.500">9.00</text>
      <path d="M686 492v24M684 515.500h4.500L686.300 519z" stroke="#6f9ce0" fill="#6f9ce0" />
      <path d="M686 477l12 6h-8V490h-8v-7h-8z" fill="#fff" stroke="#fff" strokeWidth="5" strokeLinejoin="round" />
      <path d="M686 477.500l11 4.500-1 1.500h-6V489.500h-8v-6h-6l-1-1.500z" fill="#12a5e8" stroke="#062a3c" strokeWidth="1.400" strokeLinejoin="round" />
    </g>
  </Scene>
);

const ViewCube = () => (
  <Svg w={70} h={94}>
    <path d="M15 20v60h44l2-10z" fill="#5d686c" opacity="0.500" filter="url(#soft)" />
    <path d="M10 18l44-2 3 40-4 15-39 1-4-13z" fill="url(#cube)" />
    <path d="M10 18l44-2 1 41H10z" fill="#b4babc" stroke="#a2a9ac" strokeDasharray="6 2" />
    <path d="M19 49h30v11H19z" fill="#a9b3c2" />
    <path d="M10 57h47" stroke="#8f979a" />
    <g fontFamily="Liberation Sans, sans-serif" fontWeight="bold">
      <text x="33" y="40" fontSize="10" textAnchor="middle" fill="#7b8184">TOP</text>
      <text x="33" y="68" fontSize="8" textAnchor="middle" fill="#85898b">FRONT</text>
      <text x="5" y="14" fontSize="12" fill="#46c955">Y</text>
      <text x="57" y="41" fontSize="11" fill="#cf5b60">X</text>
      <text x="8" y="90" fontSize="12" fill="#4d50cf">Z</text>
    </g>
    <path d="M10 12v6" stroke="#46c955" />
    <path d="M13 72v8" stroke="#4d50cf" />
  </Svg>
);

/* ---------- data ---------- */

const ribbon: { name: string; width: number; tools: [string, React.FC][] }[] = [
  { name: "SKETCH", width: 222, tools: [["Create Sketch", SketchBig], ["Line", LineTool], ["Rectangle", RectTool], ["Text", TextTool], ["Ellipse", EllipseTool]] },
  { name: "CREATE", width: 92, tools: [["Extrude", ExtrudeBig], ["Create Form", FormBig]] },
  { name: "MODIFY", width: 69, tools: [["Press Pull", ModifyBig]] },
  { name: "ASSEMBLE", width: 92, tools: [["New Component", AssembleBig], ["Joint", JointBig]] },
  { name: "CONSTRUCT", width: 94, tools: [["Offset Plane", ConstructBig]] },
  { name: "INSPECT", width: 74, tools: [["Measure", InspectBig]] },
  { name: "INSERT", width: 64, tools: [["Attached Canvas", Picture]] },
  { name: "MAKE", width: 59, tools: [["3D Print", MakeBig]] },
  { name: "ADD-INS", width: 74, tools: [["Scripts and Add-Ins", AddinsBig]] },
  { name: "SELECT", width: 71, tools: [["Select", SelectBig]] },
];

const browser: { name: string; bulb?: "on" | "off"; gear?: boolean; dashed?: boolean }[] = [
  { name: "Document Settings", gear: true },
  { name: "Named Views" },
  { name: "Selection Sets" },
  { name: "Origin", bulb: "off" },
  { name: "Bodies", bulb: "on" },
  { name: "Canvases", bulb: "on" },
  { name: "Sketches", bulb: "on", dashed: true },
];

const kinds: Record<string, [string, React.FC]> = {
  i: ["Canvas", () => <Picture w={16} />],
  s: ["Sketch", StepSketch],
  e: ["Extrude", StepExtrude],
  m: ["Move", StepMove],
  p: ["Pattern", StepPattern],
  c: ["Chamfer", StepChamfer],
  b: ["Body", BoxIcon],
  u: ["Combine", StepCombine],
  x: ["Split Face", StepSplit],
  y: ["Split Body", StepSplitBody],
  j: ["Joint Origin", StepJoint],
  z: ["Scale", StepScale],
  f: ["Fillet", StepFillet],
};
const steps = "iseemmpcbuxysesemsmmmmseujjzesemufsef".split("");
const activeSteps = 4;
const markerAt = 7;

const transport: [string, string][] = [
  ["To start", "M1.500 1v13M12.500 1.500v12L3.500 7.500z"],
  ["Step back", "M1 7.500L9.500 1.500v12zM12.500 5v5"],
  ["Play", "M2 1L12.500 7.500 2 14z"],
  ["Step forward", "M12.500 7.500L4 1.500v12zM1.500 5v5"],
  ["To end", "M12.500 1v13M1.500 1.500v12L10.500 7.500z"],
];

const nav: [string, React.FC, boolean, number?][] = [
  ["Orbit", OrbitIcon, true, 6],
  ["Look At", LookIcon, false, 9],
  ["Pan", HandIcon, false, 9],
  ["Zoom", ZoomIcon, false, 9],
  ["Fit", FitIcon, true, 14],
  ["Display Settings", MonitorIcon, true, 5],
  ["Grid and Snaps", MeshIcon, true, 5],
  ["Viewports", PanesIcon, true, 0],
];

export default function App() {
  return (
    <Shell>
      <GlobalStyle />
      <Gradients />
      <TitleBar>
        <FusionLogo />
        <AppTitle>Autodesk Fusion 360 (Education License)</AppTitle>
        <WindowButton aria-label="Minimize"><Svg w={10}><path d="M0 5.500h10" stroke="#888" /></Svg></WindowButton>
        <WindowButton aria-label="Restore"><Svg w={10}><path d="M0.500 2.500h7v7h-7zM2.500 2.500v-2h7v7h-2" stroke="#888" /></Svg></WindowButton>
        <WindowButton aria-label="Close"><Svg w={10}><path d="M0 0l10 10M10 0L0 10" stroke="#888" /></Svg></WindowButton>
      </TitleBar>
      <TabBar>
        <Tab>
          <TabCube />
          <TabName>dagger spinner v3*</TabName>
          <SyncRing />
          <button aria-label="Close tab"><Cross color="#8b8b8b" w={11} /></button>
        </Tab>
        <NewTab aria-label="New tab"><Svg w={11}><path d="M0 5.500h11M5.500 0v11" stroke="#8a93a0" strokeWidth="1.600" /></Svg></NewTab>
      </TabBar>
      <QuickBar>
        <QuickButton $after={24} aria-label="Data panel"><Grid9 /></QuickButton>
        <QuickButton $after={25} aria-label="File"><FileIcon /><Caret /></QuickButton>
        <QuickButton $after={25} aria-label="Save"><SaveIcon /></QuickButton>
        <QuickButton $after={16} aria-label="Undo"><Undo /><Caret /></QuickButton>
        <QuickButton aria-label="Redo"><Undo redo /><Caret color="#888" /></QuickButton>
        <Spacer />
        <QuickButton $after={25} aria-label="Comments"><Speech /></QuickButton>
        <QuickButton $after={28}><Clock />1</QuickButton>
        <QuickButton $after={25}>lamnarensharma lamnarensh... <Caret /></QuickButton>
        <QuickButton aria-label="Help"><Help /><Caret /></QuickButton>
      </QuickBar>

      <Viewport>
        <Model />
        <Dimension>
          <DimensionGrip />
          <DimensionValue aria-label="Distance value" defaultValue="9 mm" />
          <Caret />
        </Dimension>
        <CubeSlot><ViewCube /></CubeSlot>
        <Ribbon>
          <Workspace>
            <Grip $height={23} $width={5} />
            <WorkspaceName>MODEL <Caret /></WorkspaceName>
          </Workspace>
          {ribbon.map((g) => (
            <Group key={g.name} $width={g.width}>
              <Tools>
                {g.tools.map(([name, Icon]) => (
                  <Tool key={name} aria-label={name}><Icon /></Tool>
                ))}
              </Tools>
              <Caps>{g.name} <Caret /></Caps>
            </Group>
          ))}
        </Ribbon>

        <Middle>
          <div>
            <PanelHead>
              <Rewind />
              <PanelName $indent={10}>BROWSER</PanelName>
              <Disc />
              <Spacer $width={7} />
              <Grip $height={11} $width={3} />
            </PanelHead>
            <Tree>
              <RootRow>
                <Open />
                <RowBox>
                  <Bulb aria-label="Toggle dagger spinner v3"><BulbIcon /></Bulb>
                  <RootName><BoxIcon />dagger spinner v3</RootName>
                  <Activate aria-label="Activate"><RadioIcon /></Activate>
                </RowBox>
              </RootRow>
              {browser.map((r) => (
                <Row key={r.name}>
                  <Closed />
                  <RowBox $dashed={r.dashed}>
                    {r.bulb && <Bulb aria-label={`Toggle ${r.name}`}><BulbIcon off={r.bulb === "off"} /></Bulb>}
                    <RowIcon>{r.gear ? <GearIcon /> : <Folder />}</RowIcon>
                    {r.name}
                  </RowBox>
                </Row>
              ))}
            </Tree>
          </div>

          <Dialog onSubmit={(e) => e.preventDefault()}>
            <DialogHead>
              <Grip $height={9} $width={3} />
              <Spacer $width={7} />
              <Disc />
              <PanelName $indent={4}>EDIT FEATURE</PanelName>
              <Rewind flip />
            </DialogHead>
            <Field>
              <Label htmlFor="profile">Profile</Label>
              <Selected id="profile" type="button">
                <Svg w={10} h={16}><Arrowhead x={0.5} y={0.5} /></Svg>1 selected
              </Selected>
              <button type="button" aria-label="Clear profile"><Cross color="#555" w={10} /></button>
            </Field>
            <Field>
              <Label htmlFor="start">Start</Label>
              <Choice><PlaneIcon /><Select id="start"><option>Profile Plane</option></Select><Caret /></Choice>
            </Field>
            <Field>
              <Label htmlFor="direction">Direction</Label>
              <Choice><SymmetricIcon /><Select id="direction"><option>Symmetric</option></Select><Caret /></Choice>
            </Field>
            <Field>
              <Label as="span">Measurement</Label>
              <Measure type="button" aria-label="Half length"><MeasureIcon /></Measure>
              <Measure type="button" aria-label="Whole length" $on><MeasureIcon on /></Measure>
            </Field>
            <Field>
              <Label htmlFor="distance">Distance</Label>
              <Entry><EntryInput id="distance" defaultValue="9 mm" /><Caret /></Entry>
            </Field>
            <Field>
              <Label htmlFor="taper">Taper Angle</Label>
              <Entry $active><EntryInput id="taper" defaultValue="-30 deg" /><Caret /></Entry>
            </Field>
            <Rule />
            <Field>
              <Label htmlFor="operation">Operation</Label>
              <Choice><Cylinder /><Select id="operation"><option>New Body</option></Select><Caret /></Choice>
            </Field>
            <DialogFoot>
              <InfoIcon />
              <Spacer />
              <DialogButton>OK</DialogButton>
              <DialogButton type="button">Cancel</DialogButton>
            </DialogFoot>
            <Tooltip role="tooltip">d13 : Taper Angle</Tooltip>
          </Dialog>
        </Middle>

        <BottomRow>
          <PanelHead>
            <PanelName $indent={20}>COMMENTS</PanelName>
            <Disc plus />
            <Spacer $width={7} />
            <Grip $height={11} $width={3} />
          </PanelHead>
          <NavBar>
            {nav.map(([name, Icon, menu, after]) => (
              <NavButton key={name} aria-label={name} $after={after}>
                <Icon />{menu && <Caret />}
              </NavButton>
            ))}
          </NavBar>
          <Status>1 Profile | Area : 328.215 mm^2</Status>
        </BottomRow>
      </Viewport>

      <Timeline>
        <Transport>
          {transport.map(([name, d]) => (
            <button key={name} aria-label={name}>
              <Svg w={14} h={15}><path d={d} fill="#4a4a4a" stroke="#4a4a4a" strokeWidth="1.400" /></Svg>
            </button>
          ))}
        </Transport>
        <Steps>
          {steps.map((k, i) => {
            const [name, Icon] = kinds[k];
            return (
              <Step key={i} $edge={i === 0 ? "first" : i === steps.length - 1 ? "last" : undefined}>
                <StepButton aria-label={name} $on={i === 1} $dim={i >= activeSteps}><Icon /></StepButton>
                {i === markerAt && (
                  <Marker width="12" height="32" viewBox="0 0 12 32" aria-hidden="true">
                    <path d="M0 0h12v4L7 9v23H5V9L0 4z" fill="#666" />
                  </Marker>
                )}
              </Step>
            );
          })}
        </Steps>
        <Spacer />
        <TimelineSettings aria-label="Timeline settings"><GearIcon /></TimelineSettings>
      </Timeline>
      <Taskbar />
    </Shell>
  );
}
